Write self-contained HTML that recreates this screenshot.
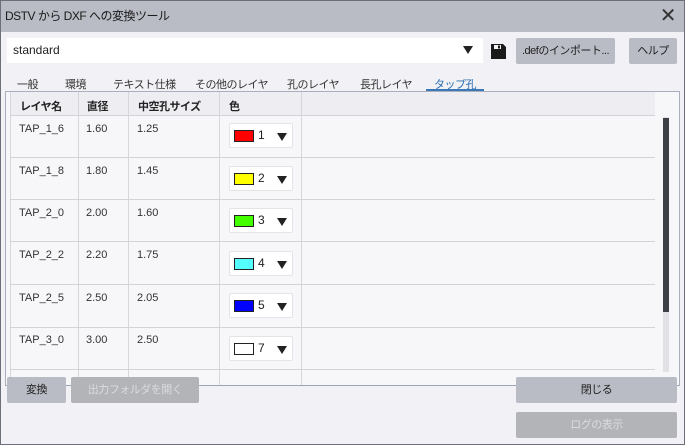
<!DOCTYPE html>
<html><head><meta charset="utf-8"><style>
*{box-sizing:border-box;margin:0;padding:0}
body{width:685px;height:445px;overflow:hidden;font-family:"Liberation Sans","Noto Sans CJK JP",sans-serif;font-size:12px;color:#222;background:#6b6f78;position:relative}
.win{position:absolute;left:1px;top:1px;width:683px;height:443px;background:#f2f2f6}
.title{position:absolute;left:0;top:0;width:683px;height:31px;background:#b9bcc5;font-size:12px;line-height:31px;padding-left:4px;color:#1a1a1a;letter-spacing:-0.5px}
.x{position:absolute;right:8px;top:0;font-size:20px;line-height:31px;color:#333}
.abs{position:absolute}
.btn{position:absolute;background:#b9bcc5;border-radius:2px;text-align:center;font-size:11px;color:#222;white-space:nowrap;letter-spacing:-0.5px}
.dis{background:#b3b4b8;color:#dcdce0}
.tab{position:absolute;top:75px;font-size:11px;color:#333;white-space:nowrap;letter-spacing:-0.5px}
.cell{position:absolute;font-size:11px;color:#333}
.hd{position:absolute;top:97px;font-size:11px;font-weight:bold;color:#222;letter-spacing:-0.5px}
.vl{position:absolute;width:1px;background:#d6d6dc}
.hl{position:absolute;height:1px;background:#d2d2d8;left:9px;width:645px}
.dd{position:absolute;left:228px;width:64px;height:25px;background:#fff;border:1px solid #e4e4e8;border-radius:2px}
.sw{position:absolute;left:4px;top:6px;width:20px;height:12px;border:1px solid #222}
.num{position:absolute;left:28px;top:4px;font-size:12px;color:#222}
.tri{position:absolute;left:47px;top:9px;width:0;height:0;border-left:5px solid transparent;border-right:5px solid transparent;border-top:8px solid #222}
</style></head><body><div class="win">
<div class="title">DSTV から DXF への変換ツール<span class="x">✕</span></div>
<div class="abs" style="left:6px;top:37px;width:476px;height:25px;background:#fff;font-size:12px;line-height:25px;padding-left:6px">standard
<span style="position:absolute;left:456px;top:8px;border-left:5px solid transparent;border-right:5px solid transparent;border-top:8px solid #222"></span></div>
<svg class="abs" style="left:489px;top:42px" width="17" height="17" viewBox="0 0 17 17"><path d="M1 1h12l3 3v12H1z" fill="#1a1a1a"/><rect x="4" y="2" width="7" height="4" fill="#f2f2f6"/><rect x="8" y="2.5" width="2" height="3" fill="#1a1a1a"/></svg>
<div class="btn" style="left:515px;top:37px;width:99px;height:26px;line-height:26px">.defのインポート...</div>
<div class="btn" style="left:628px;top:37px;width:48px;height:26px;line-height:26px">ヘルプ</div>
<div class="tab" style="left:16px">一般</div>
<div class="tab" style="left:64px">環境</div>
<div class="tab" style="left:112px">テキスト仕様</div>
<div class="tab" style="left:194px">その他のレイヤ</div>
<div class="tab" style="left:286px">孔のレイヤ</div>
<div class="tab" style="left:359px">長孔レイヤ</div>
<div class="tab" style="left:433px;color:#2a6fb0">タップ孔</div>
<div class="abs" style="left:425px;top:88px;width:58px;height:2px;background:#3a78b8"></div>
<div class="abs" style="left:4px;top:90px;width:675px;height:295px;background:#f7f7fa;border:1px solid #a9b0bc;border-bottom:1px solid #9aa6b8"></div>
<div class="abs" style="left:9px;top:91px;width:645px;height:23px;background:#ededf2"></div>
<div class="hl" style="top:114px"></div>
<div class="vl" style="left:9px;top:91px;height:293px"></div>
<div class="vl" style="left:77px;top:91px;height:293px"></div>
<div class="vl" style="left:127px;top:91px;height:293px"></div>
<div class="vl" style="left:218px;top:91px;height:293px"></div>
<div class="vl" style="left:300px;top:91px;height:293px"></div>
<div class="hd" style="left:19px">レイヤ名</div>
<div class="hd" style="left:86px">直径</div>
<div class="hd" style="left:137px">中空孔サイズ</div>
<div class="hd" style="left:228px">色</div>

<div class="cell" style="left:18px;top:122px">TAP_1_6</div><div class="cell" style="left:85px;top:122px">1.60</div><div class="cell" style="left:136px;top:122px">1.25</div>
<div class="dd" style="top:122px"><div class="sw" style="background:#f00"></div><div class="num">1</div><div class="tri"></div></div>
<div class="hl" style="top:156px"></div>
<div class="cell" style="left:18px;top:164px">TAP_1_8</div><div class="cell" style="left:85px;top:164px">1.80</div><div class="cell" style="left:136px;top:164px">1.45</div>
<div class="dd" style="top:165px"><div class="sw" style="background:#ff0"></div><div class="num">2</div><div class="tri"></div></div>
<div class="hl" style="top:198px"></div>
<div class="cell" style="left:18px;top:206px">TAP_2_0</div><div class="cell" style="left:85px;top:206px">2.00</div><div class="cell" style="left:136px;top:206px">1.60</div>
<div class="dd" style="top:207px"><div class="sw" style="background:#4f0"></div><div class="num">3</div><div class="tri"></div></div>
<div class="hl" style="top:240px"></div>
<div class="cell" style="left:18px;top:248px">TAP_2_2</div><div class="cell" style="left:85px;top:248px">2.20</div><div class="cell" style="left:136px;top:248px">1.75</div>
<div class="dd" style="top:250px"><div class="sw" style="background:#5ff"></div><div class="num">4</div><div class="tri"></div></div>
<div class="hl" style="top:283px"></div>
<div class="cell" style="left:18px;top:291px">TAP_2_5</div><div class="cell" style="left:85px;top:291px">2.50</div><div class="cell" style="left:136px;top:291px">2.05</div>
<div class="dd" style="top:292px"><div class="sw" style="background:#00f"></div><div class="num">5</div><div class="tri"></div></div>
<div class="hl" style="top:326px"></div>
<div class="cell" style="left:18px;top:333px">TAP_3_0</div><div class="cell" style="left:85px;top:333px">3.00</div><div class="cell" style="left:136px;top:333px">2.50</div>
<div class="dd" style="top:335px"><div class="sw" style="background:#fff"></div><div class="num">7</div><div class="tri"></div></div>
<div class="hl" style="top:368px"></div>
<div class="abs" style="left:662px;top:116px;width:6px;height:255px;background:#e2e2e6"></div>
<div class="abs" style="left:662px;top:117px;width:6px;height:194px;background:#3c4046"></div>

<div class="btn" style="left:6px;top:376px;width:59px;height:26px;line-height:26px">変換</div>
<div class="btn dis" style="left:70px;top:376px;width:128px;height:26px;line-height:26px">出力フォルダを開く</div>
<div class="btn" style="left:515px;top:376px;width:161px;height:26px;line-height:26px">閉じる</div>
<div class="btn dis" style="left:515px;top:411px;width:161px;height:26px;line-height:26px">ログの表示</div>
</div></body></html>
